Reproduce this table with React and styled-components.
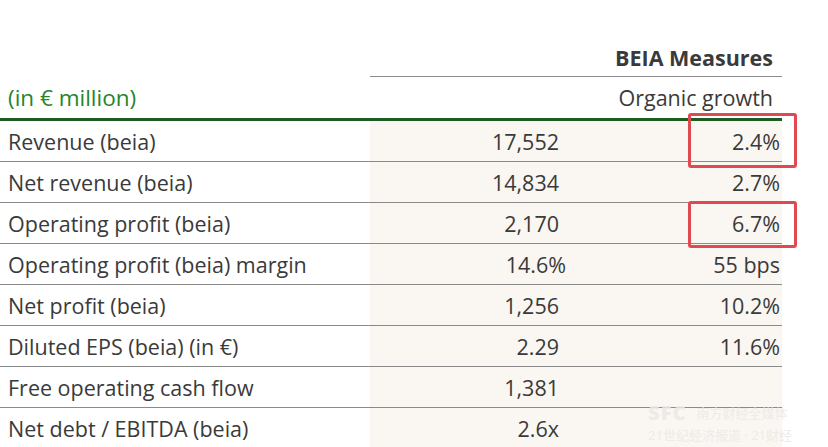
import React from "react"
import styled, { createGlobalStyle } from "styled-components"

const GlobalStyle = createGlobalStyle`
  html, body {
    margin: 0;
    padding: 0;
    background: #ffffff;
  }
  body {
    font-family: "Open Sans", "Noto Sans", "Noto Sans CJK SC", sans-serif;
    color: #333333;
  }
`

const Page = styled.div`
  position: relative;
  width: 828px;
  height: 447px;
  overflow: hidden;
  background: #ffffff;
`

const Table = styled.div`
  width: 782px;
  display: grid;
  grid-template-columns: 370px 200px 212px;
`

const GroupHead = styled.div`
  grid-column: 2 / span 2;
  height: 77px;
  border-bottom: 1px solid #8d8d8d;
  display: flex;
  align-items: flex-end;
  justify-content: flex-end;
  padding: 0 9px 4px 0;
  box-sizing: border-box;
  font-size: 21.5px;
  font-weight: 700;
  color: #3a3a3a;
`

const SubHead = styled.div`
  height: 44px;
  display: flex;
  align-items: center;
  justify-content: ${(p) => (p.right ? "flex-end" : "flex-start")};
  padding: ${(p) => (p.right ? "0 9px 0 0" : "0 0 0 8px")};
  font-size: ${(p) => (p.green ? "22.5px" : "21.5px")};
  color: ${(p) => (p.green ? "#25862a" : "#3a3a3a")};
  border-bottom: 3px solid #1d5c22;
  box-sizing: border-box;
`

const Cell = styled.div`
  position: relative;
  height: 41px;
  display: flex;
  align-items: center;
  justify-content: ${(p) => (p.label ? "flex-start" : "flex-end")};
  padding: ${(p) => (p.label ? "0 0 0 8px" : p.growth ? "0 2px 0 0" : "0 11px 0 0")};
  background: ${(p) => (p.label ? "#ffffff" : "#faf6f2")};
  border-bottom: 1.5px solid #8a8a8a;
  box-sizing: border-box;
  font-size: 21.5px;
  color: #3a3a3a;
  white-space: nowrap;
`

const Hang = styled.span`
  margin-right: ${(p) => p.hang || 0}px;
`

const Highlight = styled.div`
  position: absolute;
  z-index: 3;
  left: 118px;
  right: -15px;
  top: ${(p) => p.top}px;
  bottom: ${(p) => p.bottom}px;
  border: 3px solid #df4a50;
  border-radius: 3px;
  pointer-events: none;
`

const Watermark = styled.div`
  position: absolute;
  z-index: 4;
  right: 36px;
  bottom: 5px;
  display: flex;
  flex-direction: column;
  align-items: flex-start;
  gap: 7px;
  color: rgba(235, 232, 230, 0.85);
  font-size: 13px;
  line-height: 14px;
`

const MarkTop = styled.div`
  display: flex;
  align-items: center;
  gap: 10px;
  line-height: 16px;
  span:first-child {
    font-size: 20px;
    font-weight: 800;
    letter-spacing: 1px;
  }
`

const rows = [
  { label: "Revenue (beia)", value: "17,552", growth: "2.4%", box: { top: -8, bottom: -7 } },
  { label: "Net revenue (beia)", value: "14,834", growth: "2.7%" },
  { label: "Operating profit (beia)", value: "2,170", growth: "6.7%", box: { top: -2, bottom: -5 } },
  { label: "Operating profit (beia) margin", value: "14.6%", growth: "55 bps", hang: -7 },
  { label: "Net profit (beia)", value: "1,256", growth: "10.2%" },
  { label: "Diluted EPS (beia) (in €)", value: "2.29", growth: "11.6%" },
  { label: "Free operating cash flow", value: "1,381", growth: "" },
  { label: "Net debt / EBITDA (beia)", value: "2.6x", growth: "" },
]

export default function App() {
  return (
    <>
      <GlobalStyle />
      <Page>
        <Table>
          <div />
          <GroupHead>BEIA Measures</GroupHead>
          <SubHead green>(in € million)</SubHead>
          <SubHead />
          <SubHead right>Organic growth</SubHead>
          {rows.map((r) => (
            <React.Fragment key={r.label}>
              <Cell label>{r.label}</Cell>
              <Cell>
                <Hang hang={r.hang}>{r.value}</Hang>
              </Cell>
              <Cell growth>
                {r.growth}
                {r.box && <Highlight top={r.box.top} bottom={r.box.bottom} />}
              </Cell>
            </React.Fragment>
          ))}
        </Table>
        <Watermark>
          <MarkTop>
            <span>SFC</span>
            <span>南方财经全媒体</span>
          </MarkTop>
          <div>21世纪经济报道 · 21财经</div>
        </Watermark>
      </Page>
    </>
  )
}
